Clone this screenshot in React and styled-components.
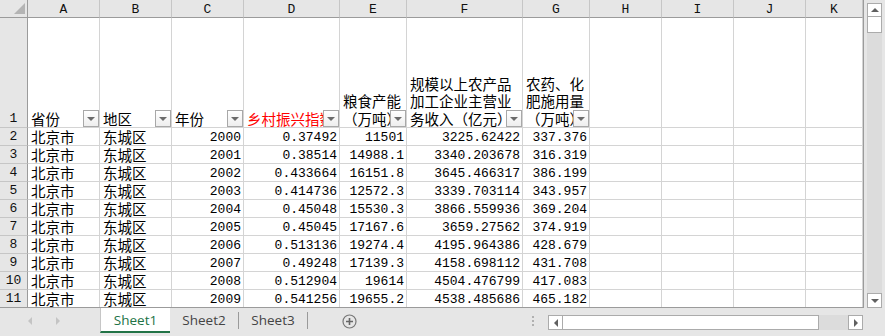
import React from "react";
import styled, { createGlobalStyle } from "styled-components";

const GlobalStyle = createGlobalStyle`
  html, body {
    margin: 0;
    padding: 0;
    background: #e6e6e6;
  }
`;

const COLUMNS = [
  { letter: "A", width: 72 },
  { letter: "B", width: 72 },
  { letter: "C", width: 72 },
  { letter: "D", width: 96 },
  { letter: "E", width: 67 },
  { letter: "F", width: 116 },
  { letter: "G", width: 67 },
  { letter: "H", width: 72 },
  { letter: "I", width: 72 },
  { letter: "J", width: 72 },
  { letter: "K", width: 57 },
];

const HEADERS = [
  { lines: ["省份"] },
  { lines: ["地区"] },
  { lines: ["年份"] },
  { lines: ["乡村振兴指数"], red: true },
  { lines: ["粮食产能", "（万吨）"] },
  { lines: ["规模以上农产品", "加工企业主营业", "务收入（亿元）"] },
  { lines: ["农药、化", "肥施用量", "（万吨）"] },
];

const ROWS = [
  ["2000", "0.37492", "11501", "3225.62422", "337.376"],
  ["2001", "0.38514", "14988.1", "3340.203678", "316.319"],
  ["2002", "0.433664", "16151.8", "3645.466317", "386.199"],
  ["2003", "0.414736", "12572.3", "3339.703114", "343.957"],
  ["2004", "0.45048", "15530.3", "3866.559936", "369.204"],
  ["2005", "0.45045", "17167.6", "3659.27562", "374.919"],
  ["2006", "0.513136", "19274.4", "4195.964386", "428.679"],
  ["2007", "0.49248", "17139.3", "4158.698112", "431.708"],
  ["2008", "0.512904", "19614", "4504.476799", "417.083"],
  ["2009", "0.541256", "19655.2", "4538.485686", "465.182"],
];

const App = () => {
  return (
    <>
      <GlobalStyle />
      <Window>
        <Main>
          <Sheet>
            <SheetGrid>
              <Corner />
              {COLUMNS.map((c) => (
                <ColHead key={c.letter}>{c.letter}</ColHead>
              ))}

              <RowHead $bottom>1</RowHead>
              {COLUMNS.map((c, i) => {
                const h = HEADERS[i];
                if (!h) return <Cell key={c.letter} />;
                return (
                  <HeadCell key={c.letter} $red={h.red}>
                    {h.lines.map((line) => (
                      <HeadLine key={line}>{line}</HeadLine>
                    ))}
                    <FilterButton />
                  </HeadCell>
                );
              })}

              {ROWS.map((row, r) => (
                <React.Fragment key={row[0]}>
                  <RowHead>{r + 2}</RowHead>
                  <TextCell>北京市</TextCell>
                  <TextCell>东城区</TextCell>
                  {row.map((v, i) => (
                    <NumCell key={i}>{v}</NumCell>
                  ))}
                  {COLUMNS.slice(7).map((c) => (
                    <Cell key={c.letter} />
                  ))}
                </React.Fragment>
              ))}
            </SheetGrid>
          </Sheet>

          <VScroll>
            <ScrollButton $dir="up" />
            <VThumb />
            <Track />
            <ScrollButton $dir="down" />
          </VScroll>
        </Main>

        <BottomBar>
          <TabNav>
            <NavArrow $dir="left" />
            <NavArrow $dir="right" />
          </TabNav>
          <Tab $active>Sheet1</Tab>
          <Tab>Sheet2</Tab>
          <TabSep />
          <Tab>Sheet3</Tab>
          <TabSep />
          <AddSheet>
            <svg width="15" height="15" viewBox="0 0 15 15">
              <circle cx="7.5" cy="7.5" r="6.5" fill="none" stroke="#777" strokeWidth="1.2" />
              <path d="M7.5 4v7M4 7.5h7" stroke="#666" strokeWidth="1.6" />
            </svg>
          </AddSheet>
          <Spacer />
          <Grip>
            <span />
            <span />
            <span />
          </Grip>
          <HScroll>
            <ScrollButton $dir="left" />
            <HThumb />
            <Track />
            <ScrollButton $dir="right" />
          </HScroll>
        </BottomBar>
      </Window>
    </>
  );
};
export default App;

const Window = styled.div`
  width: 885px;
  height: 336px;
  background: #e6e6e6;
  display: flex;
  flex-direction: column;
  overflow: hidden;
`;

const Main = styled.div`
  display: flex;
  height: 308px;
`;

const Sheet = styled.div`
  width: 864px;
  height: 308px;
  box-sizing: border-box;
  border-right: 1px solid #9b9b9b;
  border-bottom: 1px solid #9b9b9b;
  background: #fff;
  overflow: hidden;
`;

const SheetGrid = styled.div`
  display: grid;
  grid-template-columns: 28px ${COLUMNS.map((c) => `${c.width}px`).join(" ")};
  grid-template-rows: 18px 110px repeat(10, 18px);
`;

const Cell = styled.div`
  box-sizing: border-box;
  border-right: 1px solid #d4d4d4;
  border-bottom: 1px solid #d4d4d4;
  background: #fff;
  white-space: nowrap;
`;

const Corner = styled.div`
  position: relative;
  box-sizing: border-box;
  background: #e6e6e6;
  border-right: 1px solid #9b9b9b;
  border-bottom: 1px solid #9b9b9b;

  &::after {
    content: "";
    position: absolute;
    right: 2px;
    bottom: 3px;
    width: 11px;
    height: 11px;
    background: #b4b4b4;
    clip-path: polygon(100% 0, 100% 100%, 0 100%);
  }
`;

const ColHead = styled.div`
  box-sizing: border-box;
  background: #e6e6e6;
  border-right: 1px solid #c6c6c6;
  border-bottom: 1px solid #9b9b9b;
  font-family: "Liberation Mono", monospace;
  font-size: 13px;
  line-height: 15px;
  padding-top: 2px;
  text-align: center;
  color: #111;
`;

const RowHead = styled.div`
  box-sizing: border-box;
  background: #e6e6e6;
  border-right: 1px solid #9b9b9b;
  border-bottom: 1px solid #c6c6c6;
  font-family: "Liberation Mono", monospace;
  font-size: 13px;
  line-height: 16px;
  padding-top: ${(p) => (p.$bottom ? 0 : 1)}px;
  color: #111;
  display: flex;
  justify-content: center;
  align-items: ${(p) => (p.$bottom ? "flex-end" : "center")};
`;

const HeadCell = styled(Cell)`
  position: relative;
  overflow: hidden;
  display: flex;
  flex-direction: column;
  justify-content: flex-end;
  padding-left: 3px;
  font-family: "Noto Sans CJK SC", sans-serif;
  font-size: 14.5px;
  color: ${(p) => (p.$red ? "#ff0000" : "#000")};
`;

const HeadLine = styled.div`
  line-height: 17.5px;
  height: 17.5px;
`;

const FilterButton = styled.div`
  position: absolute;
  right: 0;
  bottom: 0;
  width: 16px;
  height: 17px;
  box-sizing: border-box;
  border: 1px solid #a8a8a8;
  background: linear-gradient(#ffffff, #eeeeee);
  display: flex;
  align-items: center;
  justify-content: center;

  &::after {
    content: "";
    border-top: 4px solid #6b6b6b;
    border-left: 4px solid transparent;
    border-right: 4px solid transparent;
    margin-top: 1px;
  }
`;

const TextCell = styled(Cell)`
  font-family: "Noto Sans CJK SC", sans-serif;
  font-size: 14.5px;
  line-height: 16px;
  padding: 1px 0 0 3px;
  color: #000;
`;

const NumCell = styled(Cell)`
  font-family: "Liberation Mono", monospace;
  font-size: 13px;
  line-height: 16px;
  padding-top: 2px;
  text-align: right;
  padding-right: 2px;
  color: #000;
`;

const VScroll = styled.div`
  width: 15px;
  margin: 3px 0 0 3px;
  background: #dcdcdc;
  display: flex;
  flex-direction: column;
`;

const arrows = {
  up: "border-bottom: 4px solid #606060; border-left: 4px solid transparent; border-right: 4px solid transparent;",
  down: "border-top: 4px solid #606060; border-left: 4px solid transparent; border-right: 4px solid transparent;",
  left: "border-right: 4px solid #606060; border-top: 4px solid transparent; border-bottom: 4px solid transparent;",
  right: "border-left: 4px solid #606060; border-top: 4px solid transparent; border-bottom: 4px solid transparent;",
};

const ScrollButton = styled.div`
  flex: none;
  width: 15px;
  height: ${(p) => (p.$dir === "up" ? 14 : 15)}px;
  box-sizing: border-box;
  border: 1px solid #ababab;
  background: #fff;
  display: flex;
  align-items: center;
  justify-content: center;

  &::after {
    content: "";
    ${(p) => arrows[p.$dir]}
  }
`;

const VThumb = styled.div`
  height: 16px;
  box-sizing: border-box;
  border: 1px solid #ababab;
  border-top: none;
  background: #fff;
`;

const Track = styled.div`
  flex: 1;
`;

const BottomBar = styled.div`
  height: 28px;
  display: flex;
  align-items: flex-start;
`;

const TabNav = styled.div`
  width: 100px;
  height: 26px;
  display: flex;
  align-items: center;
  gap: 24px;
  padding-left: 28px;
  box-sizing: border-box;
`;

const NavArrow = styled.div`
  width: 0;
  height: 0;
  ${(p) =>
    p.$dir === "left"
      ? "border-right: 4px solid #c4c4c4;"
      : "border-left: 4px solid #c4c4c4;"}
  border-top: 4px solid transparent;
  border-bottom: 4px solid transparent;
`;

const Tab = styled.div`
  width: ${(p) => (p.$active ? 70 : 68)}px;
  height: 25px;
  box-sizing: border-box;
  display: flex;
  align-items: center;
  justify-content: center;
  font-family: "Open Sans", sans-serif;
  font-size: 13.5px;
  color: ${(p) => (p.$active ? "#217346" : "#444")};
  background: ${(p) => (p.$active ? "#fff" : "transparent")};
  border-bottom: 2px solid ${(p) => (p.$active ? "#217346" : "transparent")};
  border-left: ${(p) => (p.$active ? "1px solid #c6c6c6" : "none")};
  padding-top: 1px;
`;

const TabSep = styled.div`
  width: 1px;
  height: 17px;
  margin-top: 4px;
  background: #9a9a9a;
`;

const AddSheet = styled.div`
  margin-left: 34px;
  height: 26px;
  display: flex;
  align-items: center;
`;

const Spacer = styled.div`
  flex: 1;
`;

const Grip = styled.div`
  height: 26px;
  margin-right: 14px;
  display: flex;
  flex-direction: column;
  justify-content: center;
  gap: 2px;

  span {
    width: 2px;
    height: 2px;
    background: #b0b0b0;
  }
`;

const HScroll = styled.div`
  width: 315px;
  height: 15px;
  margin-top: 7px;
  margin-right: 22px;
  box-sizing: border-box;
  background: #dcdcdc;
  display: flex;

  ${ScrollButton} {
    height: 15px;
  }
`;

const HThumb = styled.div`
  width: 256px;
  box-sizing: border-box;
  border: 1px solid #ababab;
  border-left: none;
  background: #fff;
`;
